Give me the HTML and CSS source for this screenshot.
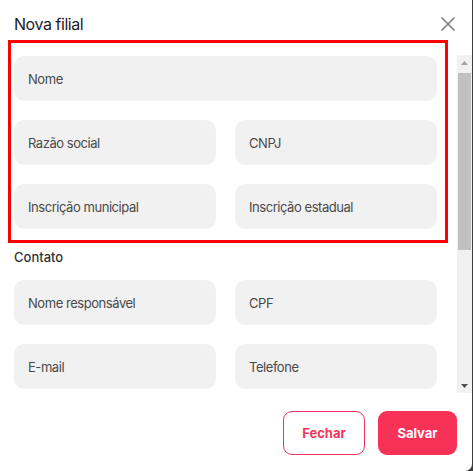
FILE: index.html
```html
<!DOCTYPE html>
<html lang="pt-BR">
<head>
<meta charset="utf-8">
<title>Nova filial</title>
<link rel="stylesheet" href="styles.css">
</head>
<body>
<div class="modal">
  <header class="modal-header">
    <h1 class="modal-title">Nova filial</h1>
    <button class="close-btn" aria-label="Fechar">
      <svg width="14" height="14" viewBox="0 0 14 14"><path d="M1 1L13 13M13 1L1 13" stroke="#7b7b7b" stroke-width="1.6" stroke-linecap="round" fill="none"/></svg>
    </button>
  </header>
  <div class="modal-body">
    <div class="scroll-content">
      <div class="form-grid">
        <div class="field full">Nome</div>
        <div class="field">Razão social</div>
        <div class="field">CNPJ</div>
        <div class="field">Inscrição municipal</div>
        <div class="field">Inscrição estadual</div>
      </div>
      <h2 class="section-title">Contato</h2>
      <div class="form-grid">
        <div class="field">Nome responsável</div>
        <div class="field">CPF</div>
        <div class="field">E-mail</div>
        <div class="field">Telefone</div>
      </div>
    </div>
    <div class="scrollbar" aria-hidden="true">
      <div class="sb-btn">
        <svg width="7" height="4" viewBox="0 0 7 4"><path d="M3.5 0L7 4H0Z" fill="#a3a3a3"/></svg>
      </div>
      <div class="sb-track">
        <div class="sb-thumb"></div>
      </div>
      <div class="sb-btn">
        <svg width="7" height="4" viewBox="0 0 7 4"><path d="M0 0H7L3.5 4Z" fill="#505050"/></svg>
      </div>
    </div>
  </div>
  <footer class="modal-footer">
    <button class="btn btn-outline">Fechar</button>
    <button class="btn btn-primary">Salvar</button>
  </footer>
  <div class="highlight"></div>
</div>
</body>
</html>
```

FILE: styles.css
```css
html, body {
  margin: 0;
  padding: 0;
  background: #3c3c3c;
}
body {
  font-family: Inter, "Noto Sans", "Liberation Sans", sans-serif;
  color: #222;
}
.modal {
  position: relative;
  width: 472px;
  height: 471px;
  background: #fff;
  border-radius: 0 0 7px 0;
  display: flex;
  flex-direction: column;
  overflow: hidden;
}
.modal-header {
  height: 55px;
  flex: none;
  display: flex;
  align-items: flex-start;
  justify-content: space-between;
  padding: 0 17px 0 14px;
  box-sizing: border-box;
}
.modal-title {
  margin: 14px 0 0;
  font-size: 16px;
  font-weight: 400;
  line-height: 20px;
  color: #1d1d1d;
  letter-spacing: -0.45px;
}
.close-btn {
  margin-top: 17px;
  padding: 0;
  border: 0;
  background: none;
  width: 14px;
  height: 14px;
  display: flex;
}
.modal-body {
  height: 338px;
  flex: none;
  display: flex;
}
.scroll-content {
  flex: 1;
  overflow: hidden;
  padding: 1px 20px 0 14px;
}
.scrollbar {
  width: 15px;
  flex: none;
  background: #f1f1f1;
  display: flex;
  flex-direction: column;
}
.sb-btn {
  height: 15px;
  flex: none;
  display: flex;
  align-items: center;
  justify-content: center;
}
.sb-track {
  flex: 1;
  padding: 3px 1px 0 1px;
}
.sb-thumb {
  height: 177px;
  background: #c1c1c1;
}
.form-grid {
  display: grid;
  grid-template-columns: 1fr 1fr;
  gap: 19px;
}
.field {
  height: 45px;
  background: #f1f1f1;
  border-radius: 10px;
  display: flex;
  align-items: center;
  padding-left: 14px;
  font-size: 13px;
  color: #4a4a4a;
  letter-spacing: -0.45px;
}
.field.full {
  grid-column: 1 / -1;
}
.section-title {
  margin: 20px 0 14px;
  font-size: 13px;
  font-weight: 500;
  line-height: 17px;
  color: #333;
}
.modal-footer {
  flex: 1;
  display: flex;
  justify-content: flex-end;
  align-items: flex-start;
  gap: 13px;
  padding: 18px 15px 0 0;
}
.btn {
  height: 44px;
  border-radius: 9px;
  font-family: Inter, "Liberation Sans", sans-serif;
  font-size: 13px;
  font-weight: 700;
  cursor: pointer;
}
.btn-outline {
  width: 82px;
  background: #fff;
  border: 1px solid #f5365c;
  color: #f5365c;
}
.btn-primary {
  width: 79px;
  background: #f83157;
  border: 0;
  color: #fff;
}
.highlight {
  position: absolute;
  left: 8px;
  top: 40px;
  width: 434px;
  height: 197px;
  border: 3px solid #ff0000;
  pointer-events: none;
}
```
